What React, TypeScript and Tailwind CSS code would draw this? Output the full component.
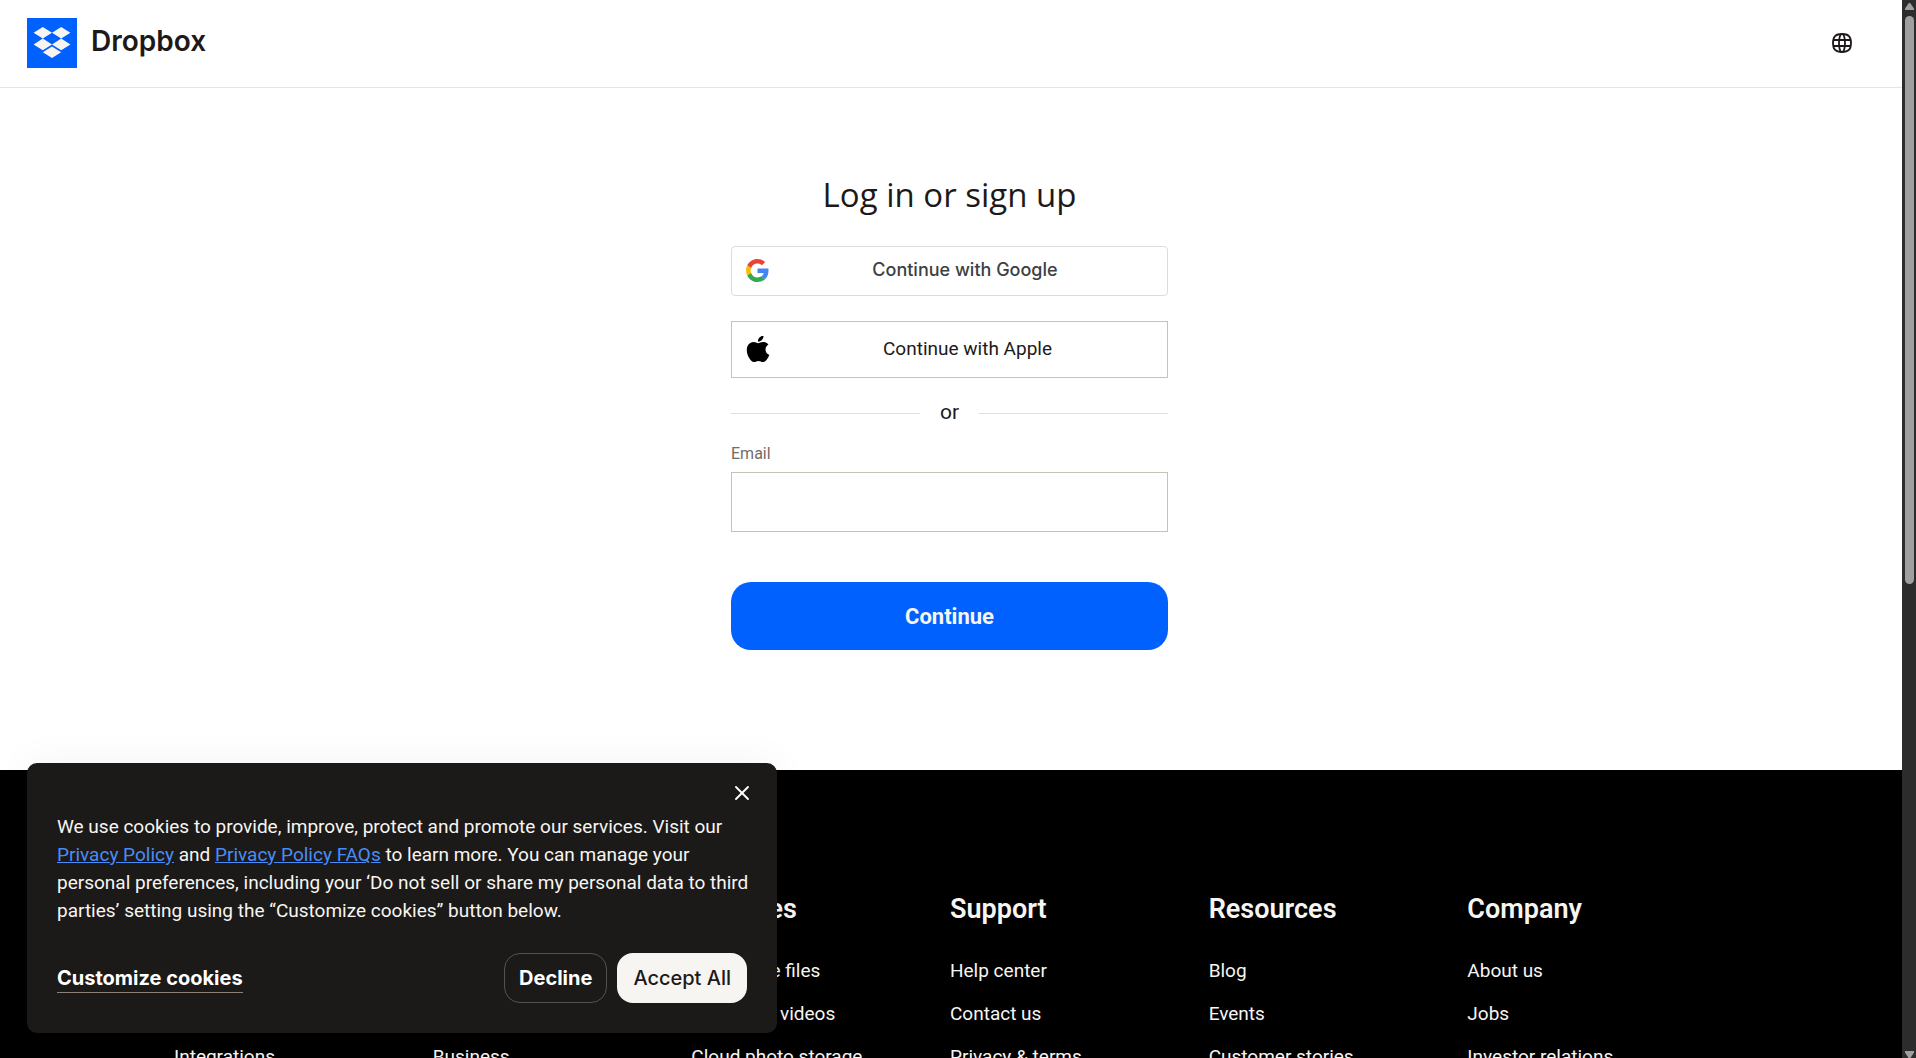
import { useState } from 'react'
import { X } from 'lucide-react'

const columns = [
  { title: 'Dropbox', links: ['Desktop app', 'Mobile app', 'Integrations'] },
  { title: 'Products', links: ['Plus', 'Professional', 'Business'] },
  { title: 'Features', links: ['Send large files', 'Send long videos', 'Cloud photo storage'] },
  { title: 'Support', links: ['Help center', 'Contact us', 'Privacy & terms'] },
  { title: 'Resources', links: ['Blog', 'Events', 'Customer stories'] },
  { title: 'Company', links: ['About us', 'Jobs', 'Investor relations'] },
]

function DropboxMark() {
  return (
    <svg viewBox="0 0 50 50" className="size-[50px]" aria-hidden="true">
      <rect width="50" height="50" fill="#0061fe" />
      <path
        fill="#f7f5f2"
        d="M15.8 9 25 14.8 15.8 20.6 6.6 14.8ZM34.2 9 43.4 14.8 34.2 20.6 25 14.8ZM15.8 20.6 25 26.4 15.8 32.2 6.6 26.4ZM34.2 20.6 43.4 26.4 34.2 32.2 25 26.4ZM25 28.4 34.2 34.2 25 40 15.8 34.2Z"
      />
    </svg>
  )
}

function GlobeIcon() {
  return (
    <svg viewBox="0 0 20 20" className="size-5" fill="none" stroke="#1e1919" strokeWidth="1.8" aria-hidden="true">
      <path d="M10 1C16.5 1 19 3.5 19 10S16.5 19 10 19 1 16.5 1 10 3.5 1 10 1Z" />
      <path d="M9 1C7.300 3.500 7 6 7 10s.3 6.500 2 9M11 1c1.700 2.500 2 5 2 9s-.3 6.500-2 9M1.500 7h17M1.500 13h17" />
    </svg>
  )
}

function GoogleIcon() {
  return (
    <svg viewBox="0 0 48 48" className="size-[23px]" aria-hidden="true">
      <path fill="#EA4335" d="M24 9.500c3.540 0 6.710 1.220 9.210 3.600l6.850-6.850C35.900 2.380 30.470 0 24 0 14.620 0 6.510 5.380 2.560 13.220l7.980 6.190C12.430 13.720 17.740 9.500 24 9.500z" />
      <path fill="#4285F4" d="M46.980 24.550c0-1.570-.15-3.090-.38-4.550H24v9.020h12.940c-.58 2.960-2.260 5.480-4.780 7.180l7.730 6c4.510-4.180 7.090-10.360 7.090-17.650z" />
      <path fill="#FBBC05" d="M10.530 28.590c-.48-1.450-.76-2.990-.76-4.590s.27-3.140.76-4.590l-7.980-6.190C.92 16.460 0 20.120 0 24c0 3.880.92 7.540 2.560 10.780l7.970-6.190z" />
      <path fill="#34A853" d="M24 48c6.480 0 11.930-2.130 15.890-5.810l-7.730-6c-2.150 1.450-4.920 2.300-8.160 2.300-6.260 0-11.570-4.220-13.470-9.910l-7.980 6.190C6.510 42.620 14.620 48 24 48z" />
    </svg>
  )
}

function AppleIcon() {
  return (
    <svg viewBox="0 0 24 27" className="h-[27px] w-6" aria-hidden="true">
      <path
        transform="translate(-1.800 -.4) scale(1.150 1.1)"
        d="M12.152 6.896c-.948 0-2.415-1.078-3.960-1.040-2.040.027-3.910 1.183-4.961 3.014-2.117 3.675-.546 9.103 1.519 12.090 1.013 1.454 2.208 3.090 3.792 3.039 1.520-.065 2.090-.987 3.935-.987 1.831 0 2.350.987 3.960.948 1.637-.026 2.676-1.480 3.676-2.948 1.156-1.688 1.636-3.325 1.662-3.415-.039-.013-3.182-1.221-3.220-4.857-.026-3.040 2.480-4.494 2.597-4.559-1.429-2.090-3.623-2.324-4.390-2.376-2-.156-3.675 1.090-4.610 1.090zM15.530 3.830c.843-1.012 1.400-2.427 1.245-3.830-1.207.052-2.662.805-3.532 1.818-.78.896-1.454 2.338-1.273 3.714 1.338.104 2.715-.688 3.559-1.701"
      />
    </svg>
  )
}

function Header() {
  return (
    <header className="flex h-[88px] shrink-0 items-center justify-between border-b border-[#e5e5e5] pr-[50px] pb-0.5 pl-[27px]">
      <a href="#home" className="flex items-center gap-3.5">
        <DropboxMark />
        <span className="pb-1 font-['Inter',sans-serif] text-[28px] leading-8 font-semibold text-[#1e1919]">Dropbox</span>
      </a>
      <button aria-label="Choose a language" className="text-[#1e1919]">
        <GlobeIcon />
      </button>
    </header>
  )
}

function LoginForm() {
  return (
    <main className="flex shrink-0 justify-center pt-[86px] pr-[3px] pb-[120px]">
      <form className="w-full max-w-[437px]" onSubmit={(e) => e.preventDefault()}>
        <h1 className="mb-[30px] text-center font-['Open_Sans',sans-serif] text-[33px] leading-[42px] text-[#1e1919]">Log in or sign up</h1>
        <button type="button" className="flex h-[50px] w-full items-center rounded border border-[#dadce0] px-[14px] pb-0.5">
          <GoogleIcon />
          <span className="flex-1 pl-2 font-['Inter',sans-serif] text-lg font-medium text-[#3c4043]">Continue with Google</span>
        </button>
        <button type="button" className="mt-[25px] flex h-[57px] w-full items-center border border-[#c6c3bc] px-[14px] text-[#1e1919]">
          <AppleIcon />
          <span className="flex-1 pl-3 text-[19px]">Continue with Apple</span>
        </button>
        <div className="mt-5 flex h-7 items-center gap-5 text-[#1e1919]">
          <span className="mt-0.5 h-px flex-1 bg-[#dfdfdf]" />
          <span className="text-[21px] leading-7">or</span>
          <span className="mt-0.5 h-px flex-1 bg-[#dfdfdf]" />
        </div>
        <label htmlFor="email" className="mt-4 block text-base text-[#736c64]">Email</label>
        <input id="email" type="email" className="mt-1.5 block h-[60px] w-full border border-[#c6c1b9] px-4 text-lg outline-none" />
        <button type="submit" className="mt-[50px] h-[68px] w-full rounded-[20px] bg-[#0061fe] text-[22px] font-bold text-[#f7f5f2]">Continue</button>
      </form>
    </main>
  )
}

function Footer() {
  return (
    <footer className="flex-1 bg-black pt-[121px] pr-[176px] pl-[174px] text-[#f7f5f2]">
      <div className="grid grid-cols-6">
        {columns.map((column) => (
          <section key={column.title}>
            <h2 className="text-[27px] leading-9 font-semibold">{column.title}</h2>
            <ul className="mt-[22px]">
              {column.links.map((link) => (
                <li key={link} className="h-[43px] text-[19px] leading-[43px] whitespace-nowrap">
                  <a href="#footer">{link}</a>
                </li>
              ))}
            </ul>
          </section>
        ))}
      </div>
    </footer>
  )
}

function CookieBanner({ onClose }: { onClose: () => void }) {
  return (
    <div
      role="dialog"
      aria-label="Cookies"
      className="absolute bottom-[25px] left-[27px] w-[750px] rounded-[10px] bg-[#1b1a18] px-[30px] pt-[50px] pb-[30px] text-[#f7f5f2] shadow-[0_0_40px_rgba(0,0,0,0.05)]"
    >
      <button aria-label="Close" onClick={onClose} className="absolute top-[18px] right-[23px]">
        <X size={24} strokeWidth={1.9} color="#ffffff" />
      </button>
      <p className="-mr-4 text-[19px] leading-7">
        We use cookies to provide, improve, protect and promote our services. Visit our{' '}
        <a href="#privacy" className="text-[#4a8cf7] underline">Privacy Policy</a> and{' '}
        <a href="#faq" className="text-[#4a8cf7] underline">Privacy Policy FAQs</a> to learn more. You can manage your
        personal preferences, including your ‘Do not sell or share my personal data to third parties’ setting using the
        “Customize cookies” button below.
      </p>
      <div className="mt-7 flex items-center justify-between font-['Inter',sans-serif] text-xl">
        <button className="border-b border-[#8b8178] leading-7 font-bold text-white">Customize cookies</button>
        <div className="flex gap-2.5">
          <button className="h-[50px] rounded-2xl border border-[#55524d] px-3.5 font-bold text-white">Decline</button>
          <button className="h-[50px] rounded-2xl bg-[#f7f5f2] px-4 font-medium text-[#1e1919]">Accept All</button>
        </div>
      </div>
    </div>
  )
}

function Scrollbar() {
  return (
    <div aria-hidden="true" className="flex w-3.5 flex-col items-center bg-[#2c2c2c] pt-[3px]">
      <svg viewBox="0 0 9 7" className="h-[7px] w-[9px]" fill="#9f9f9f">
        <path d="M3.800 0H5.200L9 5.500V7H0V5.500Z" />
      </svg>
      <div className="mt-1.5 w-[9px] flex-[17] rounded-full bg-[#9f9f9f]" />
      <div className="flex-[14]" />
      <svg viewBox="0 0 9 7" className="h-[7px] w-[9px]" fill="#9f9f9f">
        <path d="M0 0H9V1.500L5.500 7H3.500L0 1.500Z" />
      </svg>
    </div>
  )
}

export default function App() {
  const [showCookies, setShowCookies] = useState(true)

  return (
    <div className="flex h-screen overflow-hidden bg-white font-['Roboto','Liberation_Sans',sans-serif]">
      <div className="relative flex min-w-0 flex-1 flex-col overflow-hidden">
        <Header />
        <LoginForm />
        <Footer />
        {showCookies && <CookieBanner onClose={() => setShowCookies(false)} />}
      </div>
      <Scrollbar />
    </div>
  )
}
